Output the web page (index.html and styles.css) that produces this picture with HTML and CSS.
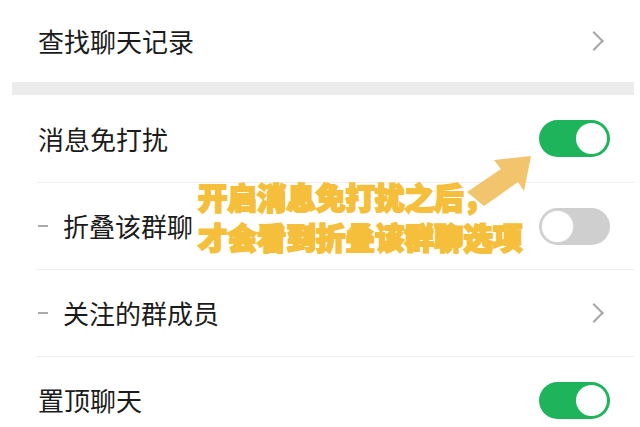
FILE: index.html
```html
<!DOCTYPE html>
<html lang="zh-CN">
<head>
  <meta charset="UTF-8">
  <meta name="viewport" content="width=device-width, initial-scale=1.0">
  <title>聊天信息</title>
  <link rel="stylesheet" href="styles.css">
</head>
<body>
  <div class="page">
    <div class="row first">
      <span class="label">查找聊天记录</span>
      <span class="chevron"></span>
    </div>

    <div class="band"></div>

    <div class="row">
      <span class="label">消息免打扰</span>
      <span class="switch on"><span class="knob"></span></span>
    </div>
    <div class="row line">
      <span class="label sub"><span class="dash"></span>折叠该群聊</span>
      <span class="switch"><span class="knob"></span></span>
    </div>
    <div class="row line">
      <span class="label sub"><span class="dash"></span>关注的群成员</span>
      <span class="chevron"></span>
    </div>
    <div class="row line">
      <span class="label">置顶聊天</span>
      <span class="switch on"><span class="knob"></span></span>
    </div>

    <!-- 标注 -->
    <div class="note">
      <div>开启消息免打扰之后，</div>
      <div>才会看到折叠该群聊选项</div>
    </div>
    <svg class="arrow" width="80" height="70" viewBox="0 0 80 70">
      <polygon points="4,50 38,27 31,18 68,14 61,49 55,40 21,64" fill="#f2c46b"/>
    </svg>
  </div>
</body>
</html>
```

FILE: styles.css
```css
body {
  margin: 0;
  background: #fff;
  font-family: "Noto Sans CJK SC", "Noto Sans", sans-serif;
  color: #1b1b1b;
}
.page {
  position: relative;
  width: 640px;
  height: 427px;
  overflow: hidden;
}
.row {
  display: flex;
  align-items: center;
  justify-content: space-between;
  height: 87px;
  margin-left: 36px;
  margin-right: 6px;
  padding-left: 2px;
  padding-right: 24px;
}
.row.first {
  height: 82px;
}
.row.line {
  border-top: 1px solid #efefef;
  height: 86px;
}
.label {
  font-size: 26px;
  line-height: 30px;
  display: flex;
  align-items: center;
}
.dash {
  display: inline-block;
  width: 10px;
  height: 2px;
  background: #aaa;
  margin-right: 15px;
}
.chevron {
  width: 12px;
  height: 12px;
  border-top: 2px solid #a5a5a5;
  border-right: 2px solid #a5a5a5;
  transform: rotate(45deg);
  margin-right: 9px;
}
.band {
  height: 13px;
  margin: 0 6px 0 12px;
  background: #ececec;
}
.switch {
  width: 71px;
  height: 37px;
  border-radius: 19px;
  background: #cfcfcf;
  display: flex;
  align-items: center;
  padding: 0 3px;
  box-sizing: border-box;
}
.switch .knob {
  width: 31px;
  height: 31px;
  border-radius: 50%;
  background: #fff;
  box-shadow: 0 0 0 1px #d8d8d8;
}
.switch.on {
  background: #1db45c;
  justify-content: flex-end;
}
.switch.on .knob {
  box-shadow: none;
}
.note {
  position: absolute;
  left: 198px;
  top: 176px;
  font-size: 29.5px;
  line-height: 40px;
  font-weight: 900;
  color: #f5bf3b;
  -webkit-text-stroke: 2px #f5bf3b;
  letter-spacing: 0;
}
.arrow {
  position: absolute;
  left: 463px;
  top: 142px;
}
```
